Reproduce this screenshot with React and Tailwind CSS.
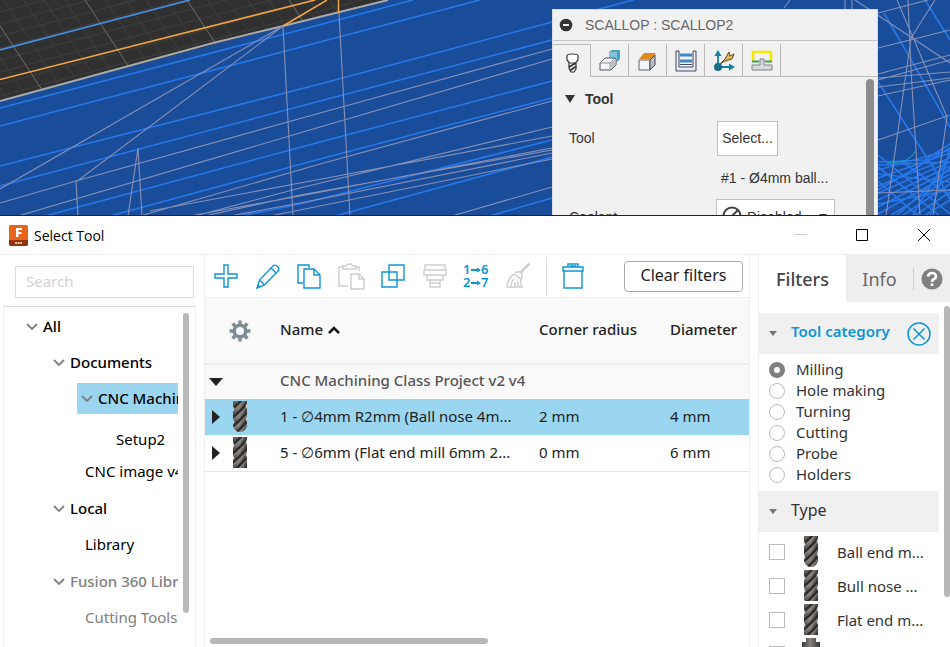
import React, { useId, useState } from "react";

const gridColumns = Array.from({ length: 24 }, (_, i) => i - 4);
const gridRows = Array.from({ length: 17 }, (_, i) => i);

const toolpaths = [
  "M0 108L300 30L413 0", "M0 126L320 42L480 0", "M0 166L320 84L552 22L640 -2", "M0 186L320 101L552 40",
  "M45 216L320 142L552 81", "M110 216L320 159L552 98", "M240 216L300 204L552 140",
  "M335 216L552 157", "M490 216L552 198",
  "M884 13L950 127", "M925 0L950 40", "M878 82L933 167L950 200",
  "M878 162L925 160L950 144", "M878 170L950 150", "M878 178L950 153", "M878 186L950 158",
  "M878 193L950 162", "M878 200L950 166", "M878 207L950 170", "M878 214L950 174",
  "M890 216L950 178", "M902 216L950 184", "M914 216L950 192", "M924 216L950 200",
  "M878 155L950 214", "M878 167L940 216", "M878 181L918 216", "M900 160L950 196",
  "M878 190L950 148", "M878 204L950 190", "M930 216L950 150", "M912 216L950 155",
  "M878 165L950 162", "M878 174L950 182", "M896 216L950 168",
];

const rapids = [
  "M0 203L76 181L320 113L552 49", "M18 216L320 127L552 59", "M140 216L320 164L552 101",
  "M150 211L300 183L552 136", "M195 216L300 188L552 127", "M190 216L300 196L552 148",
  "M205 216L300 195L552 150", "M230 216L300 203L552 153", "M270 216L300 210L552 159",
  "M452 216L552 187", "M283 26L0 189", "M283 26L76 182L78 216", "M138 148L128 216",
  "M138 148L142 216", "M283 26L293 216", "M339 13L350 216", "M784 8L790 0",
  "M845 0V9", "M852 0V9",
  "M908 0L911 70L916 150L920 216", "M897 0L947 117L933 216", "M855 0L950 63",
  "M878 13L928 0", "M878 48L950 30", "M878 74L950 55", "M878 80L950 60", "M878 78L950 72",
  "M878 87L950 78", "M878 96L950 80", "M878 140L950 115", "M878 193L950 190",
  "M935 0L911 38L886 216",
];

function Scene() {
  const clip = useId();
  return (
    <svg className="h-full w-full" viewBox="0 0 950 216" preserveAspectRatio="xMinYMin slice" fill="none" aria-hidden="true">
      <rect width="950" height="216" fill="#194d99" />
      <clipPath id={clip}>
        <path d="M0 0H388L283 26L0 101Z" />
      </clipPath>
      <g clipPath={`url(#${clip})`}>
        <rect width="400" height="110" fill="#303030" />
        {gridRows.map((i) => (
          <path key={i} d={`M0 ${i * 12}L400 ${i * 12 - 106}`} stroke="#3f3f3f" />
        ))}
        {gridColumns.map((i) => (
          <path
            key={i}
            d={`M${i * 20.4 - 17} 0L${i * 20.4 + 52} 105`}
            stroke={i % 5 === 0 ? "#6e6e6e" : "#3f3f3f"}
          />
        ))}
      </g>
      <path d="M0 101L213 43L283 26L388 0" stroke="#a9aaa5" strokeWidth="2" />
      <path d={toolpaths.join("")} stroke="#2678ea" strokeWidth="1.6" />
      <path d={rapids.join("")} stroke="#8790b8" strokeWidth="1.1" />
      <path d="M0 50L190 0" stroke="#458fe0" strokeWidth="1.8" />
      <path d="M0 79.500L315 0M283 26L327 0M338.500 0V13" stroke="#f3a544" strokeWidth="1.5" />
      <path d="M887 163Q910 164 916 150" stroke="#16a8b5" />
    </svg>
  );
}

const tabIcons = [
  <g key="tool" stroke="#333" strokeWidth="1.2" fill="#fff">
    <path d="M9 11V16L11 20L14 20L16 17V11" />
    <path d="M7 4Q7 2 12.500 2Q18 2 18 4V8L15.500 11H9.500L7 8Z" />
    <path d="M9 15L16 11M10 18.500L16 14.500" strokeWidth="2" />
  </g>,
  <g key="geometry">
    <path d="M11 2L14 0H22V9L19 12H11Z" fill="#4c9fc5" />
    <path d="M11 2H19V12H11Z" fill="#83c4e0" />
    <path d="M2 13L7 8H17L18 9V15L13 20H2Z" fill="#f4f5f8" stroke="#555966" />
    <path d="M2 13H12L17 8M12 13V20" stroke="#8b8f9a" />
    <path d="M12.500 13.500L17.500 9V15L12.500 19.500Z" fill="#b9bdc8" />
  </g>,
  <g key="heights">
    <path d="M3 9L8 3H20L15 9Z" fill="#e08a1e" />
    <path d="M3 10H14V20H3Z" fill="#f4f5f8" stroke="#62656e" />
    <path d="M14 10L19 5V15L14 20Z" fill="#b9bdc8" stroke="#44474f" />
  </g>,
  <g key="passes">
    <path d="M2 1H5V17H19V1H22V21H2Z" fill="#e8ebf3" stroke="#454b5e" />
    <path d="M6 5H18M6 11H18" stroke="#4186c6" strokeWidth="3" />
    <path d="M6 14.500H18" stroke="#454b5e" />
  </g>,
  <g key="linking">
    <path d="M6 17V4M6 17H18" stroke="#147fa0" strokeWidth="1.800" />
    <path d="M6 0L9.500 6H2.500ZM23 17L17 13.500V20.500Z" fill="#147fa0" />
    <circle cx="6" cy="17" r="4" fill="#176d87" />
    <path d="M8 14L13 9L17 2L18 6L22 4L20 9L13 11Z" fill="#e5b653" stroke="#5a4b2c" />
  </g>,
  <g key="preview">
    <path d="M3 11V2H21V11" stroke="#f4e800" strokeWidth="2.500" />
    <path d="M2 11.500H9M15 11.500H22" stroke="#3fa34a" strokeWidth="2" />
    <path d="M2 15H10V9H14V15H22V20H2Z" fill="#d7d9dd" stroke="#7e8187" />
  </g>,
];
const tabNames = ["Tool", "Geometry", "Heights", "Passes", "Linking", "Preview"];

function ScallopPalette() {
  return (
    <section className="absolute top-[9px] right-[72px] w-[326px] border border-[#dcdcdc] bg-[#f1f1f1] font-['Liberation_Sans',sans-serif] text-sm text-[#333]">
      <header className="flex h-[31px] items-center gap-3 border-b border-[#c4c4c4] px-1.5 text-[#666]">
        <svg className="size-3.5" viewBox="0 0 14 14" aria-hidden="true">
          <circle cx="7" cy="7" r="6.300" fill="#333" />
          <path d="M4 7H10" stroke="#eee" strokeWidth="2" />
        </svg>
        <h2>SCALLOP : SCALLOP2</h2>
      </header>
      <div className="flex h-9 pt-[3px]">
        {tabIcons.map((icon, i) => (
          <button
            key={tabNames[i]}
            aria-label={tabNames[i]}
            className={
              i === 0
                ? "flex w-[38px] items-center justify-center border-t border-r border-[#bbb] pt-1"
                : "flex w-[38px] items-center justify-center border-r border-b border-[#bbb] pt-0.5"
            }
          >
            <svg className="size-6" viewBox="0 0 24 22" fill="none">{icon}</svg>
          </button>
        ))}
        <div className="flex-1 border-b border-[#bbb]" />
      </div>
      <div className="flex h-40 justify-between pr-[3px]">
        <div className="flex-1 pl-4">
          <h3 className="-ml-1 flex h-11 items-center gap-2.5 font-bold">
            <svg className="h-2 w-2.5" viewBox="0 0 10 8" fill="#333" aria-hidden="true"><path d="M0 0H10L5 8Z" /></svg>
            Tool
          </h3>
          <div className="flex h-[34px] items-center">
            <span className="w-[148px]">Tool</span>
            <button className="h-[35px] w-[61px] border border-[#c0c0c0] bg-white">Select...</button>
          </div>
          <p className="pt-0.5 pl-[152px] leading-[42px]">#1 - Ø4mm ball...</p>
          <div className="flex h-9 items-center">
            <label htmlFor="coolant" className="w-[147px]">Coolant</label>
            <div className="relative">
              <select id="coolant" className="h-9 w-[119px] appearance-none border border-[#c0c0c0] bg-white pl-[30px]">
                <option>Disabled</option>
              </select>
              <svg className="pointer-events-none absolute inset-0 size-full" viewBox="0 0 119 36" fill="none" aria-hidden="true">
                <circle cx="16" cy="17" r="8.500" stroke="#444" strokeWidth="2" />
                <path d="M10 23L22 11" stroke="#444" strokeWidth="2" />
                <path d="M103 15H111L107 19Z" fill="#333" />
              </svg>
            </div>
          </div>
        </div>
        <div className="mt-0.5 w-2 rounded-t bg-[#8c8c8c]" />
      </div>
    </section>
  );
}

function EndMill({ shape }) {
  const id = useId();
  const outlines = {
    ball: "M2 0H16V25Q14 31 9 31Q4 31 2 25Z",
    bull: "M2 0H16V30L15 31H3L2 30Z",
    flat: "M2 0H16V31H2Z",
    holder: "M4 0H14V4H18V32H0V4H4Z",
  };
  return (
    <svg className="h-8 w-[18px] shrink-0" viewBox="0 0 18 32" aria-hidden="true">
      <defs>
        <linearGradient id={`${id}g`}>
          <stop offset="0" stopColor="#3c3a39" />
          <stop offset="0.45" stopColor="#85827f" />
          <stop offset="1" stopColor="#353332" />
        </linearGradient>
        <clipPath id={`${id}c`}><path d={outlines[shape]} /></clipPath>
      </defs>
      <g clipPath={`url(#${id}c)`}>
        <rect width="18" height="32" fill={`url(#${id}g)`} />
        {shape !== "holder" && [-4, 5, 14, 23, 32, 41].map((y) => (
          <g key={y} fill="none">
            <path d={`M0 ${y + 3}C6 ${y} 11 ${y - 6} 18 ${y - 14}`} stroke="#302e2d" strokeWidth="2.600" />
            <path d={`M0 ${y + 6}C6 ${y + 3} 11 ${y - 3} 18 ${y - 11}`} stroke="#9b9794" strokeWidth="0.900" />
          </g>
        ))}
      </g>
      {shape !== "holder" && (
        <path d="M2 5L3.500 8L2 11ZM2 18L3.500 21L2 24ZM16 2L14.500 5L16 8ZM16 15L14.500 18L16 21Z" fill="#fff" fillOpacity="0.700" />
      )}
    </svg>
  );
}

const toolbar = [
  { name: "New tool", icon: <path d="M11 2H15V11H24V15H15V24H11V15H2V11H11Z" /> },
  { name: "Edit", icon: <path d="M2 25L4.500 17L18 3Q20 1 22.500 3.500Q25 6 23 8L9.500 22ZM4.500 17L9.500 22M16 5L21 10M3 22L5 24" /> },
  { name: "Copy", icon: <path d="M7 20H2V2H13V5M8 6H18L24 12V25H8ZM18 6V12H24" /> },
  { name: "Paste", disabled: true, icon: <path d="M5 4H1V23H10M18 4H21V8M5 6V3H8Q9 1 11.500 1Q14 1 15 3H18V6ZM13 11H21L26 16V26H13ZM21 11V16H26" /> },
  { name: "Duplicate", icon: <path d="M9 2H24V17H9ZM2 9H17V24H2ZM9 9H17V17H9Z" /> },
  { name: "Merge", disabled: true, icon: <path d="M3 2H23V7H3ZM2 7H24V12H2ZM5 12H21V17H5ZM8 17H18V20H8ZM8 20H18V24H8Z" /> },
  {
    name: "Renumber",
    icon: (
      <g fill="#0d95d5" stroke="none" fontSize="13" fontWeight="600">
        <text x="0" y="11">1</text><text x="18" y="11">6</text>
        <text x="0" y="24">2</text><text x="18" y="24">7</text>
        <path d="M8 6H14V4.500L18 7L14 9.500V8H8ZM8 19H14V17.500L18 20L14 22.500V21H8Z" />
      </g>
    ),
  },
  { name: "Clean up", disabled: true, icon: <path d="M25 1L16 10M24 0L15 9M10 10Q14 7 17 11Q18 13 16 16L9 11M9 11Q3 14 2 24H17Q15 20 16 16M6 24Q6 19 9 16M10 24V19M14 24Q12 21 13 18" /> },
];

function ToolIcon({ disabled, children }) {
  return (
    <svg
      className={disabled ? "size-[26px] overflow-visible stroke-[#cdcdcd]" : "size-[26px] overflow-visible stroke-[#0d95d5]"}
      viewBox="0 0 26 26"
      fill="none"
      strokeWidth="1.400"
    >
      {children}
    </svg>
  );
}

function Toolbar() {
  return (
    <div className="flex h-[43px] items-center border-b border-[#eee] pr-1.5 pl-2">
      <div className="flex w-[318px] justify-between">
        {toolbar.map((item) => (
          <button key={item.name} aria-label={item.name} disabled={item.disabled}>
            <ToolIcon disabled={item.disabled}>{item.icon}</ToolIcon>
          </button>
        ))}
      </div>
      <div className="ml-[15px] h-[39px] w-px bg-[#ddd]" />
      <button aria-label="Delete" className="ml-[13px]">
        <ToolIcon>
          <path d="M4 8V25H22V8M3 4H23V8H3ZM8 4V1H18V4M10 3H16" />
        </ToolIcon>
      </button>
      <button className="ml-auto h-[31px] w-[119px] rounded-sm border border-[#aaa] pb-0.5 text-base text-[#222]">Clear filters</button>
    </div>
  );
}

const tree = [
  { label: "All", row: "pl-[21px] font-medium", open: true },
  { label: "Documents", row: "pl-12 font-medium", open: true },
  { label: "CNC Machining Class", row: "pl-[74px] font-medium", open: true, selected: true },
  { label: "Setup2", row: "mt-px pl-28 pt-2" },
  { label: "CNC image v4", row: "pl-[81px]" },
  { label: "Local", row: "mt-px pl-12 font-medium", open: true },
  { label: "Library", row: "pl-[81px]" },
  { label: "Fusion 360 Library", row: "mt-px pl-12 font-medium text-[#808080]", open: true },
  { label: "Cutting Tools", row: "pl-[81px] text-[#808080]" },
];

function LibraryTree() {
  return (
    <aside className="flex w-[204px] shrink-0 flex-col pt-[11px]">
      <input
        type="search"
        aria-label="Search"
        placeholder="Search"
        className="mr-2.5 ml-[15px] h-8 border border-[#ddd] px-2.5 pb-0.5 placeholder:text-[#d3d3d3]"
      />
      <div className="mt-2 mr-2 ml-[3px] flex min-h-0 flex-1 border border-b-0 border-[#eee] border-t-[#ddd]">
        <ul className="min-w-0 flex-1 overflow-hidden pt-px">
          {tree.map((node) => (
            <li key={node.label} className={`flex h-9 items-center whitespace-nowrap ${node.row}`}>
              <button
                className={
                  node.selected
                    ? "-ml-px flex h-[31px] items-center gap-1 bg-[#9bd6f0] pl-[3px]"
                    : "flex items-center gap-1"
                }
              >
                {node.open && (
                  <svg className="h-3 w-[14px]" viewBox="0 0 14 12" fill="none" stroke="#808080" strokeWidth="1.800" aria-hidden="true">
                    <path d="M2 4L7 9L12 4" />
                  </svg>
                )}
                {node.label}
              </button>
            </li>
          ))}
        </ul>
        <div className="mt-1.5 mr-1.5 ml-[5px] h-[300px] w-1.5 rounded-full bg-[#b8b8b8]" />
      </div>
    </aside>
  );
}

const tools = [
  { name: "1 - ∅4mm R2mm (Ball nose 4m...", shape: "ball", radius: "2 mm", diameter: "4 mm", selected: true },
  { name: "5 - ∅6mm (Flat end mill 6mm 2...", shape: "flat", radius: "0 mm", diameter: "6 mm" },
];

function ToolTable() {
  return (
    <table className="w-full table-fixed text-left text-[#222]">
      <colgroup>
        <col className="w-6" />
        <col className="w-[51px]" />
        <col />
        <col className="w-[131px]" />
        <col className="w-[79px]" />
      </colgroup>
      <thead>
        <tr className="h-[66px] border-b-2 border-[#e9edf0] bg-[#f9f9f9]">
          <th />
          <th>
            <button aria-label="Columns" className="flex">
              <svg className="size-[22px]" viewBox="-11 -11 22 22" fill="none" stroke="#7d8b92" aria-hidden="true">
                <circle r="5.800" strokeWidth="3.600" />
                {[0, 45, 90, 135].map((a) => (
                  <path key={a} d="M0 -10.500V-6.500M0 6.500V10.500" strokeWidth="3.400" transform={`rotate(${a})`} />
                ))}
              </svg>
            </button>
          </th>
          <th className="pb-0.5 font-medium">
            <button className="flex items-center gap-1">
              Name
              <svg className="h-3 w-[14px]" viewBox="0 0 14 12" fill="none" stroke="#111" strokeWidth="2.500" aria-hidden="true">
                <path d="M2 9L7 4L12 9" />
              </svg>
            </button>
          </th>
          <th className="pb-0.5 font-medium">Corner radius</th>
          <th className="pb-0.5 font-medium">Diameter</th>
        </tr>
      </thead>
      <tbody>
        <tr className="h-[35px] bg-[#f9f9f9] text-[#555]">
          <td className="pl-1">
            <svg className="h-2 w-[14px]" viewBox="0 0 14 8" aria-hidden="true"><path d="M0 0H14L7 8Z" fill="#222" /></svg>
          </td>
          <td />
          <td colSpan={3} className="pb-1 font-medium">CNC Machining Class Project v2 v4</td>
        </tr>
        {tools.map((tool) => (
          <tr key={tool.name} className={tool.selected ? "h-9 bg-[#9bd6f0]" : "h-9 border-b border-[#e5e5e5]"}>
            <td className="pl-[7px]">
              <svg className="h-[14px] w-2" viewBox="0 0 8 14" aria-hidden="true"><path d="M0 0L8 7L0 14Z" fill="#222" /></svg>
            </td>
            <td className="pl-0.5"><EndMill shape={tool.shape} /></td>
            <td className="pb-0.5 whitespace-nowrap">{tool.name}</td>
            <td className="pb-0.5">{tool.radius}</td>
            <td className="pb-0.5">{tool.diameter}</td>
          </tr>
        ))}
      </tbody>
    </table>
  );
}

const categories = ["Milling", "Hole making", "Turning", "Cutting", "Probe", "Holders"];
const types = [
  { label: "Ball end m...", shape: "ball" },
  { label: "Bull nose ...", shape: "bull" },
  { label: "Flat end m...", shape: "flat" },
  { label: "Face mill", shape: "holder" },
];

function Caret() {
  return (
    <svg className="h-[5px] w-2" viewBox="0 0 8 5" fill="#777" aria-hidden="true"><path d="M0 0H8L4 5Z" /></svg>
  );
}

function Filters() {
  const [category, setCategory] = useState("Milling");

  return (
    <aside className="flex w-48 shrink-0 flex-col border-l border-[#eee] text-[#333]">
      <div className="flex h-[47px] shrink-0 text-lg">
        <button className="w-[87px] font-medium text-[#444]">Filters</button>
        <div className="flex flex-1 items-center bg-[#eee] text-[#666]">
          <button className="h-full w-[67px]">Info</button>
          <div className="h-[22px] w-px bg-[#ccc]" />
          <button aria-label="Help" className="ml-[7px]">
            <svg className="size-[22px]" viewBox="0 0 22 22" fill="none" aria-hidden="true">
              <circle cx="11" cy="11" r="10.500" fill="#808080" />
              <path d="M7 8.500Q7.500 5 11 5Q15 5 15 8.500Q15 10 13 11Q11 12 11 14" stroke="#fff" strokeWidth="2.600" />
              <path d="M11 15.500V18" stroke="#fff" strokeWidth="2.800" />
            </svg>
          </button>
        </div>
      </div>
      <div className="flex min-h-0 flex-1">
        <div className="mt-[11px] min-w-0 flex-1 overflow-hidden">
          <div className="flex h-[41px] items-center bg-[#f0f0f0] pr-2 pl-2.5 text-[15px] font-semibold text-[#0d95d5]">
            <Caret />
            <h3 className="ml-3.5 pb-1">Tool category</h3>
            <button aria-label="Clear tool category" className="ml-auto">
              <svg className="size-6" viewBox="0 0 24 24" fill="none" stroke="#0d95d5" strokeWidth="1.500">
                <circle cx="12" cy="12" r="11" />
                <path d="M6.500 6.500L17.500 17.500M17.500 6.500L6.500 17.500" />
              </svg>
            </button>
          </div>
          <div className="pt-[5px] pb-1.5">
            {categories.map((name) => (
              <label key={name} className="flex h-[21px] items-center gap-[11px] pl-2.5">
                <input
                  type="radio"
                  name="category"
                  checked={category === name}
                  onChange={() => setCategory(name)}
                  className="size-4 appearance-none rounded-full border border-[#bbb] checked:border-[5px] checked:border-[#808080]"
                />
                {name}
              </label>
            ))}
          </div>
          <div className="flex h-[41px] items-center bg-[#f0f0f0] pl-2.5 text-base">
            <Caret />
            <h3 className="ml-3.5 pb-1">Type</h3>
          </div>
          <div className="pt-[3px]">
            {types.map((type) => (
              <label key={type.label} className="flex h-[34px] items-center pl-2.5">
                <input type="checkbox" className="size-4 appearance-none border border-[#bbb]" />
                <span className="mx-[17px] flex"><EndMill shape={type.shape} /></span>
                <span className="whitespace-nowrap">{type.label}</span>
              </label>
            ))}
          </div>
        </div>
        <div className="mt-1 ml-[5px] h-[291px] w-1.5 rounded-full bg-[#b8b8b8]" />
      </div>
    </aside>
  );
}

function TitleBar() {
  return (
    <header className="flex h-[39px] shrink-0 items-center border-b border-[#eee] pl-[9px]">
      <svg className="h-[21px] w-[19px]" viewBox="0 0 19 21" aria-hidden="true">
        <rect width="19" height="21" rx="2" fill="#e8641b" />
        <path d="M0 15H19V19Q19 21 17 21H2Q0 21 0 19Z" fill="#933406" />
        <path d="M7 3H13V5H9.500V7H12.500V9H9.500V12H7Z" fill="#fff" />
        <path d="M6 18H13" stroke="#e9c3aa" strokeWidth="2" strokeDasharray="2 0.600" />
      </svg>
      <h1 className="ml-1.5 pt-0.5 font-['Open_Sans',sans-serif] text-sm">Select Tool</h1>
      <div className="ml-auto flex items-center gap-12 pr-[19px]">
        <button aria-label="Minimize" disabled>
          <svg className="h-3.5 w-3" viewBox="0 0 12 14" stroke="#ccc"><path d="M0 6.500H12" /></svg>
        </button>
        <button aria-label="Maximize">
          <svg className="size-3.5" viewBox="0 0 14 14" fill="none" stroke="#000"><path d="M1.500 1.500H12.500V12.500H1.500Z" /></svg>
        </button>
        <button aria-label="Close">
          <svg className="size-3.5" viewBox="0 0 14 14" stroke="#000"><path d="M1 1L13 13M13 1L1 13" /></svg>
        </button>
      </div>
    </header>
  );
}

const App = () => {
  return (
    <div className="flex h-screen flex-col overflow-hidden bg-white font-['Noto_Sans',sans-serif] text-[15px] text-black">
      <div className="relative h-54 shrink-0 overflow-hidden border-b border-[#222]">
        <Scene />
        <ScallopPalette />
      </div>
      <main className="flex min-h-0 flex-1 flex-col">
        <TitleBar />
        <div className="flex min-h-0 flex-1">
          <LibraryTree />
          <section className="mr-2 flex min-w-0 flex-1 flex-col border-x border-[#eee]">
            <Toolbar />
            <ToolTable />
            <div className="mt-auto mb-[3px] ml-[5px] h-1.5 w-[278px] shrink-0 rounded-full bg-[#b8b8b8]" />
          </section>
          <Filters />
        </div>
      </main>
    </div>
  );
};

export default App;
